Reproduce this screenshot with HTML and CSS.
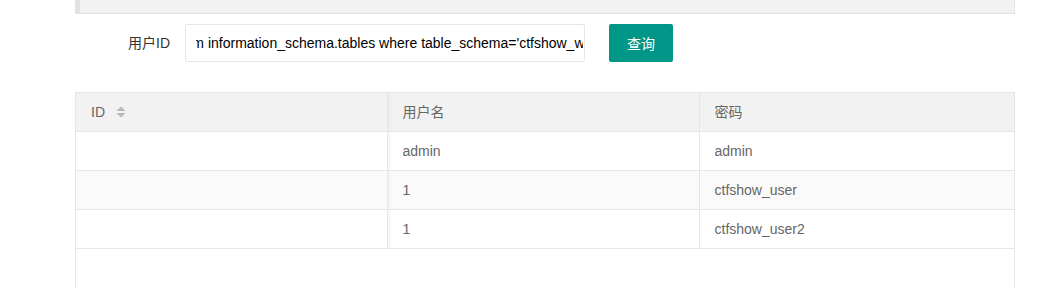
FILE: index.html
```html
<!DOCTYPE html>
<html lang="zh-CN">
<head>
    <meta charset="UTF-8">
    <meta name="viewport" content="width=device-width, initial-scale=1.0">
    <title>ctfshow</title>
    <link rel="stylesheet" href="styles.css">
</head>
<body>

    <div class="main">

        <!-- 提示区 -->
        <div class="quote"></div>

        <!-- 查询表单 -->
        <form class="searchForm" onsubmit="return false">
            <label class="formLabel" for="uid">用户ID</label>
            <input type="text" id="uid" class="formInput"
                   value="-1' union select 1,2,table_name from information_schema.tables where table_schema='ctfshow_web' --+">
            <button type="submit" class="btn">查询</button>
        </form>

        <!-- 结果表格 -->
        <div class="tableBox">
            <table class="dataTable">
                <colgroup>
                    <col style="width: 311px">
                    <col style="width: 312px">
                    <col>
                </colgroup>
                <thead>
                    <tr>
                        <th>
                            ID<span class="sort">
                                <svg width="10" height="12" viewBox="0 0 10 12">
                                    <path d="M5 0.5 L9.5 5 L0.5 5 Z" fill="#b8b8b8"/>
                                    <path d="M0.5 7 L9.5 7 L5 11.5 Z" fill="#b8b8b8"/>
                                </svg>
                            </span>
                        </th>
                        <th>用户名</th>
                        <th>密码</th>
                    </tr>
                </thead>
                <tbody>
                    <tr>
                        <td></td>
                        <td>admin</td>
                        <td>admin</td>
                    </tr>
                    <tr>
                        <td></td>
                        <td>1</td>
                        <td>ctfshow_user</td>
                    </tr>
                    <tr>
                        <td></td>
                        <td>1</td>
                        <td>ctfshow_user2</td>
                    </tr>
                </tbody>
            </table>
        </div>

    </div>

    <script>
        // 输入框滚动到 "from" 附近，和截图保持一致
        let uid = document.querySelector("#uid");
        let ctx = document.createElement("canvas").getContext("2d");
        ctx.font = getComputedStyle(uid).font;
        let prefix = "-1' union select 1,2,table_name fro";
        uid.scrollLeft = Math.round(ctx.measureText(prefix).width + 4);
    </script>

</body>
</html>
```

FILE: styles.css
```css
body{
    margin: 0;
    font-family: "Liberation Sans", Arial, "Noto Sans CJK SC", sans-serif;
    font-size: 14px;
    color: #333;
    background-color: #fff;
}

.main{
    width: 940px;
    margin-left: 75px;
}

.quote{
    height: 13px;
    background-color: #f2f2f2;
    border: 1px solid #e2e2e2;
    border-top: 0;
    border-left-width: 5px;
}

.searchForm{
    display: flex;
    align-items: center;
    margin-top: 10px;
    height: 38px;
}

.formLabel{
    width: 80px;
    padding: 9px 15px;
    line-height: 20px;
    text-align: right;
    color: #333;
}

.formInput{
    box-sizing: border-box;
    width: 400px;
    height: 38px;
    padding: 0 1px 0 10px;
    border: 1px solid #e6e6e6;
    border-radius: 2px;
    font-family: inherit;
    font-size: 14px;
    color: #000;
    outline: none;
}

.btn{
    height: 38px;
    margin-left: 24px;
    padding: 0 18px;
    border: 0;
    border-radius: 2px;
    background-color: #009688;
    color: #fff;
    font-family: inherit;
    font-size: 14px;
    cursor: pointer;
}

.tableBox{
    margin-top: 30px;
    height: 240px;
    border: 1px solid #e6e6e6;
    border-bottom: 0;
}

.dataTable{
    width: 100%;
    border-collapse: collapse;
    table-layout: fixed;
    color: #666;
}

.dataTable th,
.dataTable td{
    padding: 9px 15px;
    line-height: 20px;
    height: 20px;
    text-align: left;
    font-weight: normal;
    border-left: 1px solid #e6e6e6;
    border-bottom: 1px solid #e6e6e6;
}

.dataTable th:first-child,
.dataTable td:first-child{
    border-left: 0;
}

.dataTable thead tr{
    background-color: #f2f2f2;
}

.dataTable tbody tr:nth-child(even){
    background-color: #fafafa;
}

/* 固定列阴影 */
.dataTable th:nth-child(2),
.dataTable td:nth-child(2){
    box-shadow: inset 5px 0 5px -4px rgba(0, 0, 0, 0.06);
}

.sort{
    display: inline-block;
    vertical-align: middle;
    margin-left: 11px;
    margin-top: -3px;
}

.sort svg{
    display: block;
}
```
